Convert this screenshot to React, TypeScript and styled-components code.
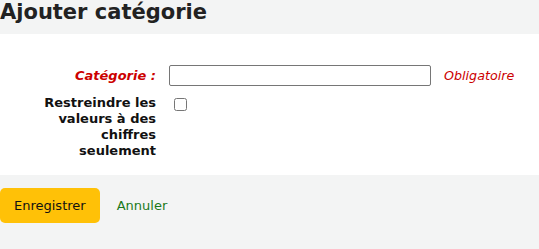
import React from 'react';
import styled, { createGlobalStyle } from 'styled-components';

const GlobalStyle = createGlobalStyle`
    html, body {
        margin: 0;
        padding: 0;
        background: #f3f4f4;
        font-family: 'DejaVu Sans', 'Liberation Sans', sans-serif;
        color: #111;
    }
`;

const Page = styled.div`
    display: flex;
    flex-direction: column;
`;

const Title = styled.h1`
    margin: 0;
    height: 34px;
    font-size: 21px;
    line-height: 24px;
    font-weight: bold;
    color: #222;
`;

const Panel = styled.fieldset`
    margin: 0;
    border: 0;
    background: #fff;
    padding: 31px 0 16px 0;
    display: flex;
    flex-direction: column;
    gap: 9px;
`;

const Row = styled.div<{ $align?: string }>`
    display: grid;
    grid-template-columns: 156px max-content max-content;
    justify-content: start;
    column-gap: 13px;
    align-items: ${(p) => p.$align || 'center'};
`;

const Label = styled.label<{ $required?: boolean }>`
    text-align: right;
    font-size: 13px;
    line-height: 16px;
    font-weight: bold;
    font-style: ${(p) => (p.$required ? 'italic' : 'normal')};
    color: ${(p) => (p.$required ? '#cc0000' : '#111')};
`;

const TextInput = styled.input`
    box-sizing: border-box;
    width: 262px;
    height: 21px;
    border: 1px solid #767676;
    border-radius: 2px;
    padding: 1px 4px;
    font-size: 13px;
`;

const Required = styled.span`
    font-size: 12.7px;
    font-style: italic;
    color: #cc0000;
`;

const CheckBox = styled.input`
    width: 13px;
    height: 13px;
    margin: 3px 0 0 5px;
`;

const Actions = styled.div`
    display: flex;
    align-items: center;
    gap: 17px;
    padding-top: 13px;
`;

const SaveButton = styled.button`
    background: #ffc107;
    border: 0;
    border-radius: 5px;
    height: 35px;
    padding: 0 14px;
    font-family: inherit;
    font-size: 13px;
    color: #111;
`;

const CancelLink = styled.a`
    color: #1a7a1a;
    font-size: 13px;
    text-decoration: none;
`;

export default function App() {
    return (
        <Page>
            <GlobalStyle />
            <Title>Ajouter catégorie</Title>
            <Panel>
                <Row>
                    <Label $required>Catégorie :</Label>
                    <TextInput type="text" />
                    <Required>Obligatoire</Required>
                </Row>
                <Row $align="start">
                    <Label>
                        Restreindre les
                        <br />
                        valeurs à des
                        <br />
                        chiffres
                        <br />
                        seulement
                    </Label>
                    <CheckBox type="checkbox" />
                </Row>
            </Panel>
            <Actions>
                <SaveButton>Enregistrer</SaveButton>
                <CancelLink href="#">Annuler</CancelLink>
            </Actions>
        </Page>
    );
}
